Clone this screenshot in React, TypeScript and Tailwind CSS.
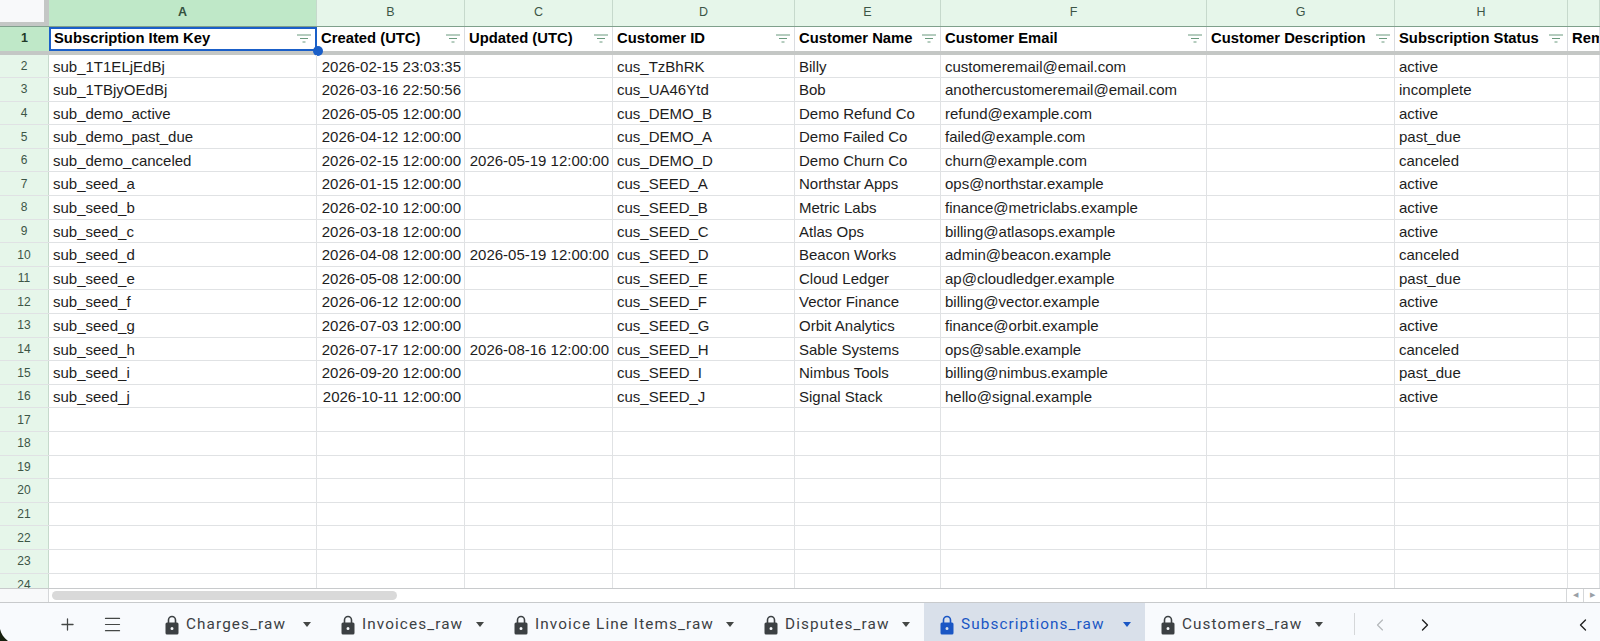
import { ChevronLeft, ChevronRight, Menu, Plus } from "lucide-react";

const columns = [
  { letter: "A", width: "w-[268px]" },
  { letter: "B", width: "w-[148px]" },
  { letter: "C", width: "w-[148px]" },
  { letter: "D", width: "w-[182px]" },
  { letter: "E", width: "w-[146px]" },
  { letter: "F", width: "w-[266px]" },
  { letter: "G", width: "w-[188px]" },
  { letter: "H", width: "w-[173px]" },
  { letter: "", width: "w-[32px]" },
];

const headers = [
  "Subscription Item Key",
  "Created (UTC)",
  "Updated (UTC)",
  "Customer ID",
  "Customer Name",
  "Customer Email",
  "Customer Description",
  "Subscription Status",
  "Rem",
];

const rows = [
  ["sub_1T1ELjEdBj", "2026-02-15 23:03:35", "", "cus_TzBhRK", "Billy", "customeremail@email.com", "", "active"],
  ["sub_1TBjyOEdBj", "2026-03-16 22:50:56", "", "cus_UA46Ytd", "Bob", "anothercustomeremail@email.com", "", "incomplete"],
  ["sub_demo_active", "2026-05-05 12:00:00", "", "cus_DEMO_B", "Demo Refund Co", "refund@example.com", "", "active"],
  ["sub_demo_past_due", "2026-04-12 12:00:00", "", "cus_DEMO_A", "Demo Failed Co", "failed@example.com", "", "past_due"],
  ["sub_demo_canceled", "2026-02-15 12:00:00", "2026-05-19 12:00:00", "cus_DEMO_D", "Demo Churn Co", "churn@example.com", "", "canceled"],
  ["sub_seed_a", "2026-01-15 12:00:00", "", "cus_SEED_A", "Northstar Apps", "ops@northstar.example", "", "active"],
  ["sub_seed_b", "2026-02-10 12:00:00", "", "cus_SEED_B", "Metric Labs", "finance@metriclabs.example", "", "active"],
  ["sub_seed_c", "2026-03-18 12:00:00", "", "cus_SEED_C", "Atlas Ops", "billing@atlasops.example", "", "active"],
  ["sub_seed_d", "2026-04-08 12:00:00", "2026-05-19 12:00:00", "cus_SEED_D", "Beacon Works", "admin@beacon.example", "", "canceled"],
  ["sub_seed_e", "2026-05-08 12:00:00", "", "cus_SEED_E", "Cloud Ledger", "ap@cloudledger.example", "", "past_due"],
  ["sub_seed_f", "2026-06-12 12:00:00", "", "cus_SEED_F", "Vector Finance", "billing@vector.example", "", "active"],
  ["sub_seed_g", "2026-07-03 12:00:00", "", "cus_SEED_G", "Orbit Analytics", "finance@orbit.example", "", "active"],
  ["sub_seed_h", "2026-07-17 12:00:00", "2026-08-16 12:00:00", "cus_SEED_H", "Sable Systems", "ops@sable.example", "", "canceled"],
  ["sub_seed_i", "2026-09-20 12:00:00", "", "cus_SEED_I", "Nimbus Tools", "billing@nimbus.example", "", "past_due"],
  ["sub_seed_j", "2026-10-11 12:00:00", "", "cus_SEED_J", "Signal Stack", "hello@signal.example", "", "active"],
  ...Array.from({ length: 8 }, () => ["", "", "", "", "", "", "", ""]),
];

const tabs = [
  { name: "Charges_raw", active: false, width: "w-[176px]" },
  { name: "Invoices_raw", active: false, width: "w-[173px]" },
  { name: "Invoice Line Items_raw", active: false, width: "w-[250px]" },
  { name: "Disputes_raw", active: false, width: "w-[176px]" },
  { name: "Subscriptions_raw", active: true, width: "w-[221px]" },
  { name: "Customers_raw", active: false, width: "w-[192px]" },
];

function FilterIcon() {
  return (
    <svg width="14" height="9" viewBox="0 0 14 9" className="shrink-0 text-[#6b9a7e]">
      <path d="M0 1h14M3 4.5h8M5.5 8h3" stroke="currentColor" strokeWidth="1" fill="none" />
    </svg>
  );
}

function LockIcon() {
  return (
    <svg width="14" height="20" viewBox="0 0 14 20" className="shrink-0">
      <path d="M3.5 8V5a3.5 3.5 0 0 1 7 0v3" stroke="currentColor" strokeWidth="1.6" fill="none" />
      <path
        fillRule="evenodd"
        d="M2 7.5h10a1.5 1.5 0 0 1 1.5 1.5v9a1.5 1.5 0 0 1-1.5 1.5H2A1.5 1.5 0 0 1 .5 18V9A1.5 1.5 0 0 1 2 7.5ZM7 12a1.5 1.5 0 1 0 0 3 1.5 1.5 0 0 0 0-3Z"
        fill="currentColor"
      />
    </svg>
  );
}

export default function App() {
  return (
    <div className="relative flex h-[641px] w-[1600px] flex-col overflow-hidden bg-white font-['Liberation_Sans',Arial,sans-serif] text-[15px] text-[#1d1d1d]">
      {/* column letters */}
      <div className="flex h-[26.5px] shrink-0 border-b border-[#7fa08c] bg-[#e6f6ea]">
        <div className="w-[49px] shrink-0 border-r-[5px] border-b-4 border-[#c4c7c5] bg-[#f8f9fa]" />
        {columns.map((c) => (
          <div
            key={c.letter}
            className={`${c.width} flex shrink-0 items-center justify-center border-r border-[#c6d9cc] text-[12.5px] ${
              c.letter === "A" ? "bg-[#bfe8c8] font-bold text-[#33503e]" : "text-[#3c5546]"
            }`}
          >
            {c.letter}
          </div>
        ))}
      </div>

      {/* frozen header row */}
      <div className="flex h-[28px] shrink-0 border-b-[4px] border-[#c4c7c5]">
        <div className="flex w-[49px] shrink-0 items-center justify-center bg-[#bfe8c8] text-[12.5px] font-bold text-[#1f3a28]">
          1
        </div>
        {headers.map((h, i) => (
          <div
            key={h}
            className={`${columns[i].width} relative flex shrink-0 items-center justify-between overflow-hidden pr-[4px] text-[14.8px] font-bold whitespace-nowrap text-black ${
              i === 0 ? "border-2 border-[#1a5fc8] pl-[3px]" : "border-r border-[#dadce0] pl-[4px]"
            }`}
          >
            <span>{h}</span>
            {i < 8 && <FilterIcon />}
          </div>
        ))}
      </div>

      {/* fill handle of the selected cell */}
      <div className="absolute top-[45.5px] left-[312.5px] h-[10px] w-[10px] rounded-full bg-[#1a5fc8]" />

      {/* data rows */}
      <div className="relative flex min-h-0 flex-1 flex-col overflow-hidden">
        {rows.map((row, r) => (
          <div key={r} className="flex h-[23.6px] shrink-0 border-b border-[#e0e2e4]">
            <div className="flex w-[49px] shrink-0 items-center justify-center border-r border-[#c6d9cc] bg-[#e6f6ea] text-[12px] text-[#3c5546]">
              {r + 2}
            </div>
            {columns.map((c, i) => (
              <div
                key={c.letter}
                className={`${c.width} shrink-0 overflow-hidden border-r border-[#e0e2e4] leading-[24px] whitespace-nowrap ${
                  i === 1 || i === 2 ? "pr-[3px] text-right" : "px-[4px]"
                }`}
              >
                {row[i] ?? ""}
              </div>
            ))}
          </div>
        ))}
      </div>

      {/* horizontal scrollbar */}
      <div className="flex h-[15px] shrink-0 items-center border-t border-b border-[#c8cacc] bg-white">
        <div className="flex h-full w-[49px] shrink-0 border-r border-[#d5d7d9] bg-[#f8f9fa]" />
        <div className="ml-[3px] h-[9px] flex-1">
          <div className="h-full w-[345px] rounded-full bg-[#d9d9d9]" />
        </div>
        <div className="flex h-full w-[34px] shrink-0 border-l border-[#d5d7d9] text-[7px] text-[#9aa0a6]">
          <span className="flex flex-1 items-center justify-center border-r border-[#d5d7d9]">◀</span>
          <span className="flex flex-1 items-center justify-center">▶</span>
        </div>
      </div>

      {/* sheet tabs */}
      <div className="flex h-[38px] shrink-0 items-stretch bg-[#f8fafd] font-['Roboto',sans-serif] text-[15.3px] tracking-[1.1px] text-[#3c4043]">
        <div className="flex w-[149px] shrink-0 items-center pt-[5px] pl-[58px] text-[#444746]">
          <Plus size={19} strokeWidth={1.6} />
          <Menu size={21} strokeWidth={1.4} className="ml-[25px]" />
        </div>
        {tabs.map((t) => (
          <div
            key={t.name}
            className={`${t.width} flex shrink-0 items-center pt-[5px] pr-[14px] pl-[16px] ${
              t.active ? "bg-[#d9e0ea] text-[#1a56c4]" : ""
            }`}
          >
            <LockIcon />
            <span className="ml-[7px] whitespace-nowrap">{t.name}</span>
            <span
              className={`ml-auto h-0 w-0 border-x-[4px] border-t-[5px] border-x-transparent ${
                t.active ? "border-t-[#1a56c4]" : "border-t-[#444746]"
              }`}
            />
          </div>
        ))}
        <div className="mt-[10px] mb-[6px] ml-[17px] w-px bg-[#d5d7d9]" />
        <div className="flex flex-1 items-center pt-[5px] text-[#1f1f1f]">
          <ChevronLeft size={20} strokeWidth={1.4} className="ml-[15px] text-[#b5b8bb]" />
          <ChevronRight size={20} strokeWidth={1.6} className="ml-[25px]" />
          <ChevronLeft size={20} strokeWidth={1.6} className="mr-[7px] ml-auto" />
        </div>
      </div>

      {/* window corner showing through bottom left */}
      <svg width="8" height="12" viewBox="0 0 8 12" className="absolute bottom-0 left-0">
        <path d="M0 0C1 5 4 9 8 12H0Z" fill="#17200f" />
      </svg>
    </div>
  );
}
